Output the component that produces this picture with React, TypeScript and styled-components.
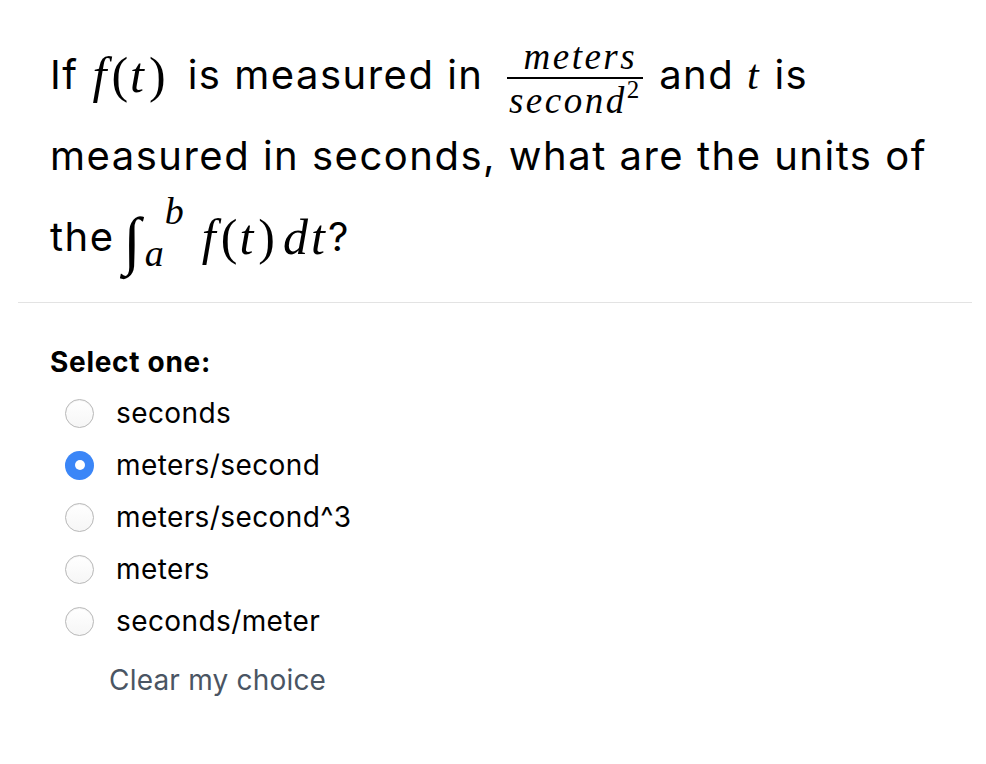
import * as React from 'react';
import styled, { createGlobalStyle } from 'styled-components';

const GlobalStyle = createGlobalStyle`
    html, body {
        margin: 0;
        padding: 0;
        background: #ffffff;
    }
    body {
        font-family: Inter, "Liberation Sans", Arial, sans-serif;
        color: #000000;
    }
`;

const options = [
    { label: 'seconds', checked: false },
    { label: 'meters/second', checked: true },
    { label: 'meters/second^3', checked: false },
    { label: 'meters', checked: false },
    { label: 'seconds/meter', checked: false },
];

const App: React.FC = () => (
    <Page>
        <GlobalStyle />
        <Question>
            <Line>
                If<MathRun gapLeft={14} gapRight={20}><M>f</M><Up>(</Up><M>t</M><Up>)</Up></MathRun>is measured in
                <Frac>
                    <Num>meters</Num>
                    <Den>second<sup>2</sup></Den>
                </Frac>
                and <M small>t</M> is
            </Line>
            <Line>measured in seconds, what are the units of</Line>
            <Line>
                the{' '}
                <Integral>
                    <IntSign>∫</IntSign>
                    <Limits>
                        <Upper>b</Upper>
                        <Lower>a</Lower>
                    </Limits>
                </Integral>
                <MathRun gapLeft={4} gapRight={0}>
                    <M>f</M><Up>(</Up><M>t</M><Up>)</Up><M lead>dt</M>
                </MathRun>?
            </Line>
        </Question>
        <Divider />
        <Answers>
            <Prompt>Select one:</Prompt>
            <OptionList>
                {options.map((o) => (
                    <Option key={o.label}>
                        <Radio checked={o.checked} />
                        <OptionLabel>{o.label}</OptionLabel>
                    </Option>
                ))}
            </OptionList>
            <ClearLink href="#">Clear my choice</ClearLink>
        </Answers>
    </Page>
);

export default App;

const Page = styled.div`
    width: 986px;
    padding: 34px 14px 0 18px;
    box-sizing: border-box;
`;

const Question = styled.div`
    padding-left: 32px;
    font-size: 40px;
    letter-spacing: 1.5px;
`;

const Line = styled.div`
    height: 81px;
    display: flex;
    align-items: center;
    white-space: pre;
`;

const MathRun = styled.span<{ gapLeft: number; gapRight: number }>`
    display: inline-flex;
    align-items: baseline;
    margin: 0 ${(p) => p.gapRight}px 0 ${(p) => p.gapLeft}px;
    letter-spacing: 0;
`;

const M = styled.span<{ small?: boolean; lead?: boolean }>`
    font-family: "Liberation Serif", "Times New Roman", serif;
    font-style: italic;
    font-size: ${(p) => (p.small ? '42px' : '50px')};
    letter-spacing: 3px;
    margin-left: ${(p) => (p.lead ? '6px' : '0')};
`;

const Up = styled.span`
    font-family: "Liberation Serif", "Times New Roman", serif;
    font-size: 50px;
    margin: 0 2px;
`;

const Frac = styled.span`
    display: inline-flex;
    flex-direction: column;
    align-items: center;
    font-family: "Liberation Serif", "Times New Roman", serif;
    font-style: italic;
    font-size: 37px;
    letter-spacing: 2.5px;
    margin: 12px 16px 0 24px;

    sup {
        font-style: normal;
        font-size: 25px;
        vertical-align: 15px;
        line-height: 0;
    }
`;

const Num = styled.span`
    padding: 0 6px 1px 16px;
    border-bottom: 2.5px solid #000;
    line-height: 38px;
`;

const Den = styled.span`
    line-height: 44px;
`;

const Integral = styled.span`
    display: inline-flex;
    align-items: center;
    margin: 0 14px 0 -4px;
    font-family: "Liberation Serif", "Times New Roman", serif;
    letter-spacing: 0;
`;

const IntSign = styled.span`
    font-size: 64px;
    font-style: italic;
    line-height: 64px;
    margin-top: 8px;
`;

const Limits = styled.span`
    display: inline-flex;
    flex-direction: column;
    font-style: italic;
    font-size: 38px;
    line-height: 34px;
`;

const Upper = styled.span`
    margin-left: 24px;
    margin-top: -10px;
`;

const Lower = styled.span`
    margin-left: 4px;
    margin-top: 8px;
`;

const Divider = styled.hr`
    border: none;
    border-top: 1px solid #e3e3e3;
    margin: 25px 0 0;
`;

const Answers = styled.div`
    padding: 40px 0 0 32px;
`;

const Prompt = styled.div`
    font-size: 28px;
    font-weight: bold;
    letter-spacing: 0.7px;
    line-height: 38px;
    margin-bottom: 12px;
`;

const OptionList = styled.div`
    display: flex;
    flex-direction: column;
    gap: 12px;
`;

const Option = styled.label`
    display: flex;
    align-items: center;
    height: 40px;
    padding-left: 15px;
`;

const Radio = styled.span<{ checked: boolean }>`
    width: 29px;
    height: 29px;
    border-radius: 50%;
    box-sizing: border-box;
    margin-right: 22px;
    position: relative;
    border: ${(p) => (p.checked ? 'none' : '1px solid #b8b8b8')};
    background: ${(p) => (p.checked ? '#3b86f7' : 'linear-gradient(#ffffff, #f6f6f6)')};
    box-shadow: ${(p) => (p.checked ? 'none' : 'inset 0 1px 1px rgba(0,0,0,0.05)')};

    &::after {
        content: '';
        display: ${(p) => (p.checked ? 'block' : 'none')};
        position: absolute;
        left: 50%;
        top: 50%;
        width: 10px;
        height: 10px;
        margin: -5px 0 0 -5px;
        border-radius: 50%;
        background: #ffffff;
    }
`;

const OptionLabel = styled.span`
    font-size: 28px;
    letter-spacing: 0.4px;
`;

const ClearLink = styled.a`
    display: inline-block;
    margin: 22px 0 0 59px;
    font-size: 28px;
    letter-spacing: 0.2px;
    color: #4a5563;
    text-decoration: none;
`;
